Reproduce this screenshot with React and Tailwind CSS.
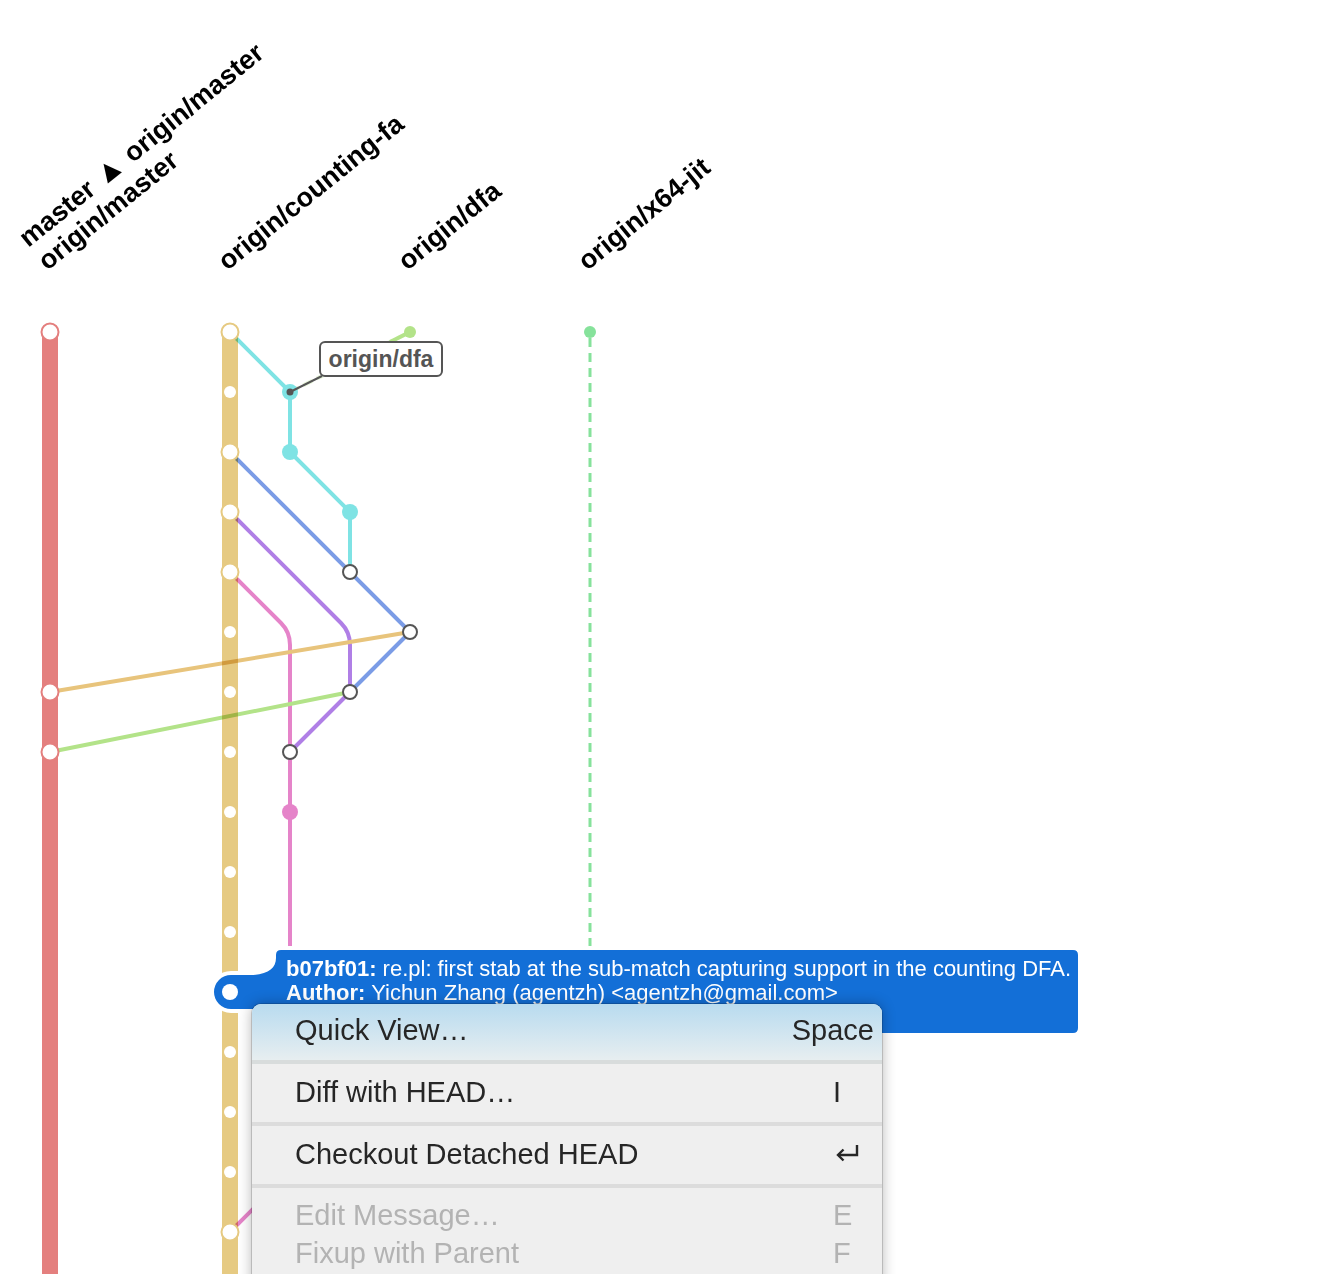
import React from "react";

const RED = "#e47f7e";
const YEL = "#e6ca82";
const CYAN = "#7fe3e4";
const BLUE = "#7b9ce6";
const PURP = "#b07fe6";
const PINK = "#e584c9";
const GREEN = "#b3e389";
const DGREEN = "#86e29b";
const GREY = "#555555";

function Graph() {
  const smallDots = [392, 632, 692, 752, 812, 872, 932, 1052, 1112, 1172];
  const yelBig = [332, 452, 512, 572, 1232];
  const redBig = [332, 692, 752];
  const greyNodes = [
    [350, 572],
    [410, 632],
    [350, 692],
    [290, 752],
  ];
  return (
    <svg className="absolute left-0 top-0" width="1338" height="1274" viewBox="0 0 1338 1274">
      <line x1="50" y1="332" x2="50" y2="1290" stroke={RED} strokeWidth="16" />
      <line x1="230" y1="332" x2="230" y2="1290" stroke={YEL} strokeWidth="16" />

      <g fill="none" strokeWidth="4" strokeLinejoin="round" className="mix-blend-multiply">
        <path d="M230,332 L290,392 L290,452 L350,512 L350,572" stroke={CYAN} />
        <path d="M230,452 L410,632 L350,692" stroke={BLUE} />
        <path d="M230,512 L341,623 Q350,632 350,645 L350,692 L290,752" stroke={PURP} />
        <path d="M230,572 L281,623 Q290,632 290,645 L290,1172 L230,1232" stroke={PINK} />
        <path d="M50,692 L410,632" stroke="#e8c47c" />
        <path d="M50,752 L350,692" stroke={GREEN} />
      </g>

      <line x1="590" y1="338" x2="590" y2="1000" stroke={DGREEN} strokeWidth="3" strokeDasharray="9 6" />
      <path d="M290,392 L410,332" stroke={GREEN} strokeWidth="4" strokeDasharray="10 5" opacity="0.3" fill="none" />
      <path d="M390,342 L410,332" stroke={GREEN} strokeWidth="4" fill="none" />

      {redBig.map((y) => (
        <circle key={"r" + y} cx="50" cy={y} r="8.5" fill="#fff" stroke={RED} strokeWidth="2" />
      ))}
      {yelBig.map((y) => (
        <circle key={"y" + y} cx="230" cy={y} r="8.5" fill="#fff" stroke={YEL} strokeWidth="2" />
      ))}
      {smallDots.map((y) => (
        <circle key={"s" + y} cx="230" cy={y} r="6" fill="#fff" />
      ))}
      <circle cx="290" cy="392" r="8" fill={CYAN} />
      <circle cx="290" cy="452" r="8" fill={CYAN} />
      <circle cx="350" cy="512" r="8" fill={CYAN} />
      <circle cx="290" cy="812" r="8" fill={PINK} />
      {greyNodes.map(([x, y]) => (
        <circle key={"g" + x + y} cx={x} cy={y} r="7" fill="#fff" stroke={GREY} strokeWidth="2" />
      ))}
      <circle cx="590" cy="332" r="6" fill={DGREEN} />
      <circle cx="410" cy="332" r="6" fill={GREEN} />
      <path d="M290,392 L322,376" stroke={GREY} strokeWidth="2" />
      <circle cx="290" cy="392" r="3.5" fill={GREY} />
    </svg>
  );
}

function Labels() {
  const inner =
    "absolute bottom-0 left-0 origin-bottom-left -rotate-[39deg] whitespace-nowrap font-bold text-[27px] leading-[30px] text-black";
  return (
    <>
      <div className="absolute left-[51px] top-[276px] h-0 w-0">
        <div className={inner}>
          <div>
            master <span className="text-[31px] leading-[30px]">▲</span> origin/master
          </div>
          <div>origin/master</div>
        </div>
      </div>
      <div className="absolute left-[231px] top-[276px] h-0 w-0">
        <div className={inner}>origin/counting-fa</div>
      </div>
      <div className="absolute left-[411px] top-[276px] h-0 w-0">
        <div className={inner}>origin/dfa</div>
      </div>
      <div className="absolute left-[591px] top-[276px] h-0 w-0">
        <div className={inner}>origin/x64-jit</div>
      </div>
    </>
  );
}

function Tooltip() {
  return (
    <div className="absolute left-[210px] top-[945px] w-[875px] h-[95px]">
      <svg className="absolute left-0 top-0" width="875" height="95" viewBox="0 0 875 95">
        <path
          d="M71,5 H863 Q868,5 868,10 V83 Q868,88 863,88 H71 Q66,88 66,83 V75 Q66,64 52,64 H21 A17,17 0 0 1 21,30 H40 C58,30 66,23 66,13 V10 Q66,5 71,5 Z"
          fill="#136fd7"
          stroke="#ffffff"
          strokeWidth="8"
          paintOrder="stroke"
        />
        <circle cx="20" cy="47" r="8" fill="#ffffff" />
      </svg>
      <div className="absolute left-[76px] top-[12px] whitespace-nowrap text-[22px] leading-[24px] text-white">
        <div>
          <span className="font-bold">b07bf01:</span> re.pl: first stab at the sub-match capturing support in the counting DFA.
        </div>
        <div>
          <span className="font-bold">Author:</span> Yichun Zhang (agentzh) &lt;agentzh@gmail.com&gt;
        </div>
      </div>
    </div>
  );
}

function ReturnIcon() {
  return (
    <svg width="26" height="20" viewBox="0 0 26 20" fill="none" stroke="#262626" strokeWidth="2.4">
      <path d="M23,2 V12 H4" />
      <path d="M9.5,6.5 L4,12 L9.5,17.5" />
    </svg>
  );
}

function Menu() {
  return (
    <div className="absolute left-[252px] top-[1004px] w-[630px] h-[300px] overflow-hidden rounded-t-[9px] bg-[#efefef] text-[29px] text-[#262626] shadow-[0_0_14px_rgba(0,0,0,0.3)] ring-1 ring-black/15">
      <div className="flex h-[56px] items-center bg-gradient-to-b from-[#b8dbef] to-[#e7eef0] pb-[3px] pl-[43px]">
        <span className="flex-1">Quick View…</span>
        <span className="mr-[8px]">Space</span>
      </div>
      <div className="h-[4px] bg-[#d8dcdc]" />
      <div className="flex h-[58px] items-center pl-[43px]">
        <span className="flex-1">Diff with HEAD…</span>
        <span className="mr-[8px] w-[41px]">I</span>
      </div>
      <div className="h-[4px] bg-[#dcdcdc]" />
      <div className="flex h-[58px] items-center pl-[43px]">
        <span className="flex-1">Checkout Detached HEAD</span>
        <span className="mr-[8px] flex w-[41px] items-center pl-[1px] pb-[4px]">
          <ReturnIcon />
        </span>
      </div>
      <div className="h-[4px] bg-[#dcdcdc]" />
      <div className="pt-[9px] text-[#b3b3b3]">
        <div className="flex h-[38px] items-center pl-[43px]">
          <span className="flex-1">Edit Message…</span>
          <span className="mr-[8px] w-[41px]">E</span>
        </div>
        <div className="flex h-[38px] items-center pl-[43px]">
          <span className="flex-1">Fixup with Parent</span>
          <span className="mr-[8px] w-[41px]">F</span>
        </div>
      </div>
    </div>
  );
}

export default function App() {
  return (
    <div className="relative h-[1274px] w-[1338px] overflow-hidden bg-white font-['Liberation_Sans',Arial,sans-serif]">
      <Graph />
      <Labels />
      <div className="absolute left-[319px] top-[341px] flex h-[36px] w-[124px] items-center justify-center rounded-[6px] border-2 border-[#555555] bg-white text-[23px] font-bold text-[#555555]">
        origin/dfa
      </div>
      <Tooltip />
      <Menu />
    </div>
  );
}
